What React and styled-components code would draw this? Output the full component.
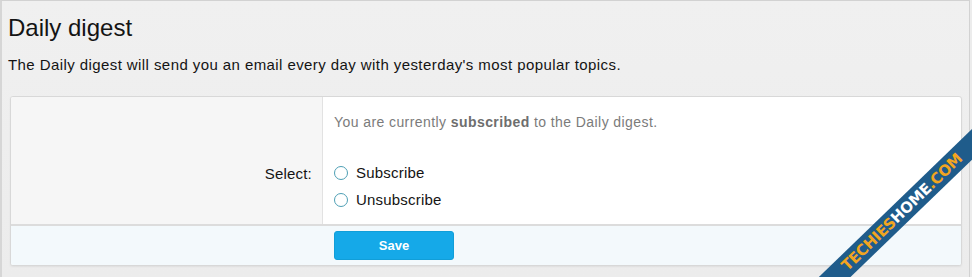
import React from "react";
import styled, { createGlobalStyle } from "styled-components";

const GlobalStyle = createGlobalStyle`
  html, body {
    margin: 0;
    padding: 0;
    background: #ececec;
  }
  body {
    font-family: "Liberation Sans", Arial, sans-serif;
    color: #141414;
  }
`;

const App = () => {
  return (
    <>
      <GlobalStyle />
      <Viewport>
        <Page>
          <Title>Daily digest</Title>
          <Intro>
            The Daily digest will send you an email every day with yesterday's
            most popular topics.
          </Intro>
          <Panel>
            <FormRow>
              <Label>Select:</Label>
              <Field>
                <Hint>
                  You are currently <b>subscribed</b> to the Daily digest.
                </Hint>
                <RadioList>
                  <RadioItem>
                    <Radio type="radio" name="digest" />
                    Subscribe
                  </RadioItem>
                  <RadioItem>
                    <Radio type="radio" name="digest" />
                    Unsubscribe
                  </RadioItem>
                </RadioList>
              </Field>
            </FormRow>
            <Footer>
              <span />
              <Actions>
                <SaveButton type="button">Save</SaveButton>
              </Actions>
            </Footer>
          </Panel>
        </Page>
        <Ribbon>
          <span className="orange">TECHIES</span>
          <span className="white">HOME</span>
          <span className="orange">.COM</span>
        </Ribbon>
      </Viewport>
    </>
  );
};

export default App;

const Viewport = styled.div`
  position: relative;
  width: 972px;
  height: 277px;
  overflow: hidden;
`;

const Page = styled.div`
  box-sizing: border-box;
  width: 970px;
  height: 277px;
  border: 1px solid #d2d2d2;
  border-left: 2px solid #d6d6d6;
  border-bottom: none;
  background: linear-gradient(#f0f0f0, #ececec);
  padding: 12px 8px 0 6px;
`;

const Title = styled.h1`
  margin: 0;
  font-size: 24px;
  line-height: 29px;
  font-weight: 400;
  color: #141414;
`;

const Intro = styled.p`
  margin: 14px 0 0;
  font-size: 15px;
  line-height: 18px;
  letter-spacing: 0.42px;
  color: #141414;
`;

const Panel = styled.div`
  margin: 22px 0 0 2px;
  width: 952px;
  box-sizing: border-box;
  border: 1px solid #d8d8d8;
  border-radius: 3px;
  overflow: hidden;
  box-shadow: 0 1px 2px rgba(0, 0, 0, 0.06);
  background: #fff;
`;

const FormRow = styled.div`
  display: grid;
  grid-template-columns: 312px 1fr;
  border-bottom: 2px solid #dcdcdc;
`;

const Label = styled.div`
  background: #f6f6f6;
  border-right: 1px solid #e2e2e2;
  text-align: right;
  padding: 63px 10px 0 0;
  font-size: 15px;
  line-height: 27px;
  letter-spacing: 0.2px;
  color: #141414;
`;

const Field = styled.div`
  padding: 17px 10px 11px 11px;
`;

const Hint = styled.div`
  font-size: 14px;
  line-height: 17px;
  letter-spacing: 0.42px;
  color: #7b7b7b;
  b {
    color: #6e6e6e;
  }
`;

const RadioList = styled.div`
  margin-top: 28px;
  display: flex;
  flex-direction: column;
`;

const RadioItem = styled.label`
  display: flex;
  align-items: center;
  gap: 8px;
  height: 27px;
  font-size: 15px;
  letter-spacing: 0.2px;
  color: #141414;
`;

const Radio = styled.input`
  appearance: none;
  margin: 0;
  width: 14px;
  height: 14px;
  border-radius: 50%;
  border: 1.5px solid #4e9fb5;
  background: #fff;
  box-sizing: border-box;
`;

const Footer = styled.div`
  display: grid;
  grid-template-columns: 313px 1fr;
  background: #f3f9fc;
`;

const Actions = styled.div`
  padding: 5px 10px 5px 10px;
`;

const SaveButton = styled.button`
  width: 120px;
  height: 29px;
  border: 1px solid #119ed8;
  border-radius: 3px;
  background: #15a9e8;
  color: #fff;
  font-family: "Liberation Sans", Arial, sans-serif;
  font-weight: 700;
  font-size: 13px;
  cursor: pointer;
`;

const Ribbon = styled.div`
  position: absolute;
  left: 752px;
  top: 201px;
  width: 300px;
  height: 22px;
  transform: rotate(-44deg);
  background: #1f5c8b;
  display: flex;
  align-items: center;
  justify-content: center;
  font-family: "DejaVu Sans", sans-serif;
  font-weight: 700;
  font-size: 15px;
  letter-spacing: -0.3px;
  .orange {
    color: #f2a51f;
  }
  .white {
    color: #fff;
  }
`;
